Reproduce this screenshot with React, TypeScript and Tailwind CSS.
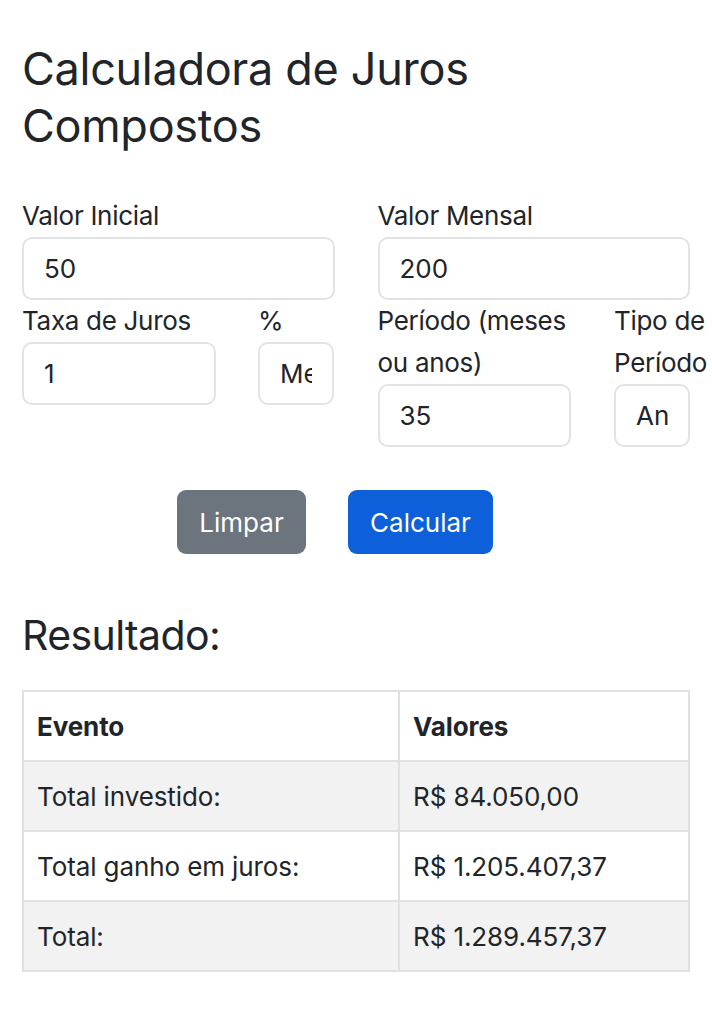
import React from "react";

const font = { fontFamily: "Inter, 'Noto Sans', sans-serif" };

function Field({ label, value, className }: { label: React.ReactNode; value: string; className?: string }) {
  return (
    <div className={className}>
      <div className="text-[26px] leading-[42px] text-[#212529] tracking-[-0.3px] whitespace-nowrap">{label}</div>
      <div className="h-[63px] border-2 border-[#e1e3e6] rounded-[10px] bg-white flex items-center px-[20px] text-[26px] text-[#212529]">
        <div className="overflow-hidden whitespace-nowrap">{value}</div>
      </div>
    </div>
  );
}

export default function App() {
  const rows = [
    { evento: "Total investido:", valor: "R$ 84.050,00", striped: true },
    { evento: "Total ganho em juros:", valor: "R$ 1.205.407,37", striped: false },
    { evento: "Total:", valor: "R$ 1.289.457,37", striped: true },
  ];

  return (
    <main className="bg-white min-h-[1024px] px-[22px] pt-[40px] text-[#212529]" style={font}>
      <h1 className="text-[45px] leading-[57px] font-normal tracking-[-0.3px]">
        Calculadora de Juros Compostos
      </h1>

      <div className="mt-[41px] grid grid-cols-2 gap-x-[43px]">
        <Field label="Valor Inicial" value="50" />
        <Field label="Valor Mensal" value="200" />

        <div className="flex gap-x-[42px] items-start">
          <Field label="Taxa de Juros" value="1" className="w-[194px]" />
          <Field label="%" value="Mensal" className="w-[76px]" />
        </div>
        <div className="flex gap-x-[43px] items-start">
          <Field label={<>Período (meses<br />ou anos)</>} value="35" className="w-[194px]" />
          <Field label={<>Tipo de<br />Período</>} value="Anual" className="w-[76px]" />
        </div>
      </div>

      <div className="mt-[43px] ml-[155px] flex gap-x-[42px]">
        <button className="h-[64px] w-[129px] rounded-[9px] bg-[#6c757d] text-white text-[26px]">Limpar</button>
        <button className="h-[64px] w-[145px] rounded-[9px] bg-[#0d60d9] text-white text-[26px]">Calcular</button>
      </div>

      <h2 className="mt-[55px] text-[41px] leading-[52px] tracking-[-0.6px]">Resultado:</h2>

      <table className="mt-[29px] w-[668px] border-collapse text-[26px] tracking-[-0.1px]">
        <thead>
          <tr className="h-[70px]">
            <th className="w-[376px] border-2 border-[#dfe1e5] text-left font-bold px-[13px]">Evento</th>
            <th className="border-2 border-[#dfe1e5] text-left font-bold px-[13px]">Valores</th>
          </tr>
        </thead>
        <tbody>
          {rows.map((r) => (
            <tr key={r.evento} className={`h-[70px] ${r.striped ? "bg-[#f2f2f2]" : "bg-white"}`}>
              <td className="border-2 border-[#dfe1e5] px-[13px]">{r.evento}</td>
              <td className="border-2 border-[#dfe1e5] px-[13px]">{r.valor}</td>
            </tr>
          ))}
        </tbody>
      </table>
    </main>
  );
}
